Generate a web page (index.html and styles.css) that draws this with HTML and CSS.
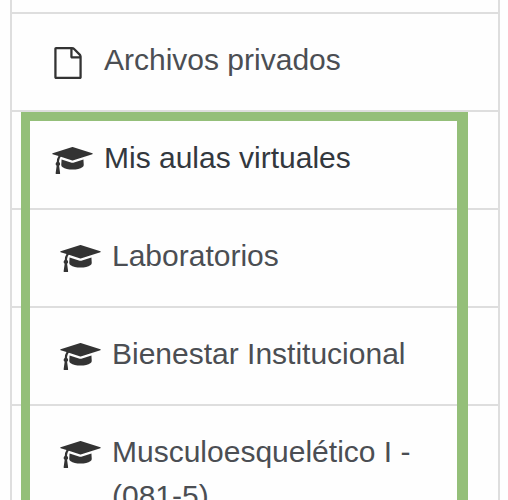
FILE: index.html
```html
<!DOCTYPE html>
<html lang="es">
<head>
<meta charset="UTF-8" />
<meta name="viewport" content="width=device-width, initial-scale=1" />
<title>Mis aulas virtuales</title>
<link rel="stylesheet" href="styles.css">
</head>
<body>

<svg class="sprite" aria-hidden="true">
  <symbol id="icon-file" viewBox="128 0 1536 1792">
    <path d="M1596 380q28 28 48 76t20 88v1152q0 40-28 68t-68 28h-1344q-40 0-68-28t-28-68v-1600q0-40 28-68t68-28h896q40 0 88 20t76 48zm-444-244v376h376q-10-29-22-41l-313-313q-12-12-41-22zm384 1528v-1024h-416q-40 0-68-28t-28-68v-416h-768v1536h1280z"/>
  </symbol>
  <symbol id="icon-cap" viewBox="0 128 2304 1536">
    <path d="M1774 836l18 316q4 69-82 128t-235 93.5-323 34.5-323-34.5-235-93.5-82-128l18-316 574 181q22 7 48 7t48-7zM2304 512q0 23-22 31l-1120 352q-4 1-10 1t-10-1l-652-206q-43 34-71 111.5t-34 178.5q63 36 63 109 0 69-58 107l58 433q2 14-8 25-9 11-24 11h-192q-15 0-24-11-10-11-8-25l58-433q-58-38-58-107 0-73 65-111 11-207 98-330l-333-104q-22-8-22-31t22-31l1120-352q4-1 10-1t10 1l1120 352q22 8 22 31z"/>
  </symbol>
</svg>

<nav class="menu">
  <a class="item" href="#">
    <svg class="icon icon-file"><use href="#icon-file"/></svg>
    <span class="texto">Archivos privados</span>
  </a>
  <a class="item activo" href="#">
    <svg class="icon"><use href="#icon-cap"/></svg>
    <span class="texto">Mis aulas virtuales</span>
  </a>
  <a class="item curso" href="#">
    <svg class="icon"><use href="#icon-cap"/></svg>
    <span class="texto">Laboratorios</span>
  </a>
  <a class="item curso" href="#">
    <svg class="icon"><use href="#icon-cap"/></svg>
    <span class="texto">Bienestar Institucional</span>
  </a>
  <a class="item curso" href="#">
    <svg class="icon"><use href="#icon-cap"/></svg>
    <span class="texto">Musculoesquelético I - (081-5)</span>
  </a>
  <div class="marco"></div>
</nav>

</body>
</html>
```

FILE: styles.css
```css
body {
  margin: 0;
  height: 500px;
  overflow: hidden;
  background: #fefefe;
  font-family: "Liberation Sans", Arial, sans-serif;
  font-size: 30px;
  line-height: 44px;
  color: #4b4e53;
}

.sprite {
  display: none;
}

/* Lista lateral */
.menu {
  position: relative;
  box-sizing: border-box;
  width: 490px;
  height: 500px;
  margin-left: 10px;
  padding-top: 12px;
  border-left: 2px solid #dedede;
  border-right: 2px solid #dedede;
  overflow: hidden;
}

.item {
  display: flex;
  align-items: flex-start;
  box-sizing: border-box;
  min-height: 98px;
  padding: 24px 50px 24px 40px;
  border-top: 2px solid #dedede;
  color: inherit;
  text-decoration: none;
}

.curso {
  padding-left: 48px;
}

.activo {
  color: #33383e;
}

.icon {
  flex: none;
  width: 41px;
  height: 27px;
  margin: 11px 11px 0 0;
  fill: #333;
}

.icon-file {
  width: 28px;
  height: 32px;
  margin: 9px 22px 0 2px;
}

/* Marco verde sobre los cursos */
.marco {
  position: absolute;
  top: 112px;
  left: 9px;
  right: 30px;
  bottom: 0;
  border: solid #94bf79;
  border-width: 9px 11px 0 9px;
}
```
